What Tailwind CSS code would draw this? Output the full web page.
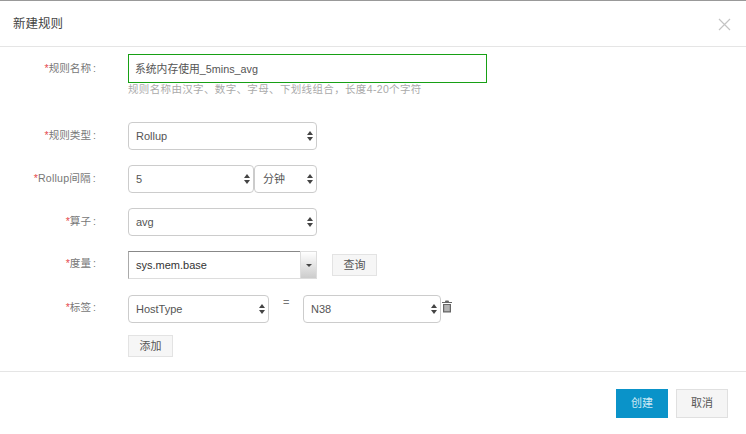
<!DOCTYPE html>
<html lang="en">
	<head>
		<meta charset="UTF-8" />
		<title>新建规则</title>
		<script src="https://cdn.jsdelivr.net/npm/@tailwindcss/browser@4"></script>
	</head>
	<body class="h-[434px] w-[746px] overflow-hidden bg-white font-['Liberation_Sans','Noto_Sans_CJK_SC',sans-serif] text-[11px] text-[#555]">
		<div class="h-px bg-[#999]"></div>
		<header class="flex h-[46px] items-center justify-between border-b border-[#e5e5e5] pl-[13px] pr-[15px] pt-px">
			<h1 class="text-[12.5px] font-normal text-[#444]">新建规则</h1>
			<svg class="size-[13px]" viewBox="0 0 13 13" fill="none" stroke="#c4c4c4" stroke-width="1.2"><path d="M1 1l11 11M12 1L1 12" /></svg>
		</header>
		<form class="h-[324px] pt-[7px]">
			<div class="flex">
				<label class="w-[96px] pt-[7px] text-right text-[10.6px] text-[#777]"><span class="text-[#e5484d]">*</span>规则名称<span class="ml-[2px]">:</span></label>
				<div class="ml-[32px]">
					<input class="block h-[29px] w-[359px] border border-[#17a015] pb-px pl-[6px] text-[10.8px] text-[#555]" value="系统内存使用_5mins_avg" />
					<p class="-mt-px mb-[2px] text-[10.5px] leading-[14px] tracking-[0.35px] text-[#aaa]">规则名称由汉字、数字、字母、下划线组合，长度4-20个字符</p>
				</div>
			</div>
			<div class="mt-[24px] flex items-center">
				<label class="w-[96px] text-right text-[10.6px] text-[#777]"><span class="text-[#e5484d]">*</span>规则类型<span class="ml-[2px]">:</span></label>
				<div class="ml-[32px] flex h-[28px] w-[189px] items-center justify-between rounded-[4px] border border-[#ccc] pl-[7px] pr-[3px]">
					<span>Rollup</span>
					<svg class="h-[10px] w-[6px]" viewBox="0 0 6 10" fill="#444"><path d="M3 0l3 4H0zM3 10L0 6h6z" /></svg>
				</div>
			</div>
			<div class="mt-[15px] flex items-center">
				<label class="w-[96px] text-right text-[10.6px] tracking-[0.2px] text-[#777]"><span class="text-[#e5484d]">*</span>Rollup间隔<span class="ml-[2px]">:</span></label>
				<div class="ml-[32px] flex h-[28px] w-[126px] items-center justify-between rounded-[4px] border border-[#ccc] pl-[7px] pr-[3px]">
					<span>5</span>
					<svg class="h-[10px] w-[6px]" viewBox="0 0 6 10" fill="#444"><path d="M3 0l3 4H0zM3 10L0 6h6z" /></svg>
				</div>
				<div class="flex h-[28px] w-[63px] items-center justify-between rounded-[4px] border border-[#ccc] pl-[8px] pr-[3px]">
					<span>分钟</span>
					<svg class="h-[10px] w-[6px]" viewBox="0 0 6 10" fill="#444"><path d="M3 0l3 4H0zM3 10L0 6h6z" /></svg>
				</div>
			</div>
			<div class="mt-[15px] flex items-center">
				<label class="w-[96px] text-right text-[10.6px] text-[#777]"><span class="text-[#e5484d]">*</span>算子<span class="ml-[2px]">:</span></label>
				<div class="ml-[32px] flex h-[28px] w-[189px] items-center justify-between rounded-[4px] border border-[#ccc] pl-[7px] pr-[3px]">
					<span>avg</span>
					<svg class="h-[10px] w-[6px]" viewBox="0 0 6 10" fill="#444"><path d="M3 0l3 4H0zM3 10L0 6h6z" /></svg>
				</div>
			</div>
			<div class="mt-[15px] flex items-center">
				<label class="w-[96px] pb-[2px] text-right text-[10.6px] text-[#777]"><span class="text-[#e5484d]">*</span>度量<span class="ml-[2px]">:</span></label>
				<div class="ml-[32px] flex h-[28px] w-[189px]">
					<div class="flex flex-1 items-center border border-b-[#ddd] border-l-[#aaa] border-r-0 border-t-[#888] pl-[7px] text-[#333]">sys.mem.base</div>
					<div class="flex w-[17px] items-center justify-center border border-[#ddd] bg-gradient-to-b from-white to-[#ccc]">
						<svg class="h-[3px] w-[6px]" viewBox="0 0 6 3" fill="#444"><path d="M0 0h6L3 3z" /></svg>
					</div>
				</div>
				<button type="button" class="ml-[15px] h-[22px] w-[45px] border border-[#e3e3e3] bg-[#f6f6f6] text-[11px] text-[#555]">查询</button>
			</div>
			<div class="mt-[16px] flex">
				<label class="w-[96px] pt-[5px] text-right text-[10.6px] text-[#777]"><span class="text-[#e5484d]">*</span>标签<span class="ml-[2px]">:</span></label>
				<div class="ml-[32px]">
					<div class="flex">
						<div class="flex h-[28px] w-[141px] items-center justify-between rounded-[4px] border border-[#ccc] pl-[7px] pr-[3px]">
							<span>HostType</span>
							<svg class="h-[10px] w-[6px]" viewBox="0 0 6 10" fill="#444"><path d="M3 0l3 4H0zM3 10L0 6h6z" /></svg>
						</div>
						<span class="ml-[14px] w-[20px] leading-[14px] text-[#777]">=</span>
						<div class="flex h-[28px] w-[138px] items-center justify-between rounded-[4px] border border-[#ccc] pl-[7px] pr-[3px]">
							<span>N38</span>
							<svg class="h-[10px] w-[6px]" viewBox="0 0 6 10" fill="#444"><path d="M3 0l3 4H0zM3 10L0 6h6z" /></svg>
						</div>
						<svg class="ml-px mt-[5px] h-[13px] w-[10px]" viewBox="0 0 10 12" fill="#666"><path d="M3.5 0h3l.6 1.4H10v1.2H0V1.4h2.9zM1 3.4h8V12H1zM2.6 4.6v6.2h.9V4.6zm1.9 0v6.2h1V4.6zm2 0v6.2h.9V4.6z" fill-rule="evenodd" /></svg>
					</div>
					<button type="button" class="mt-[12px] block h-[22px] w-[45px] border border-[#e3e3e3] bg-[#f6f6f6] text-[11px] text-[#555]">添加</button>
				</div>
			</div>
		</form>
		<footer class="flex justify-end gap-[8px] border-t border-[#e5e5e5] pr-[18px] pt-[17px]">
			<button type="button" class="h-[29px] w-[52px] bg-[#0a93c9] text-[11px] text-[#cfeaf5]">创建</button>
			<button type="button" class="h-[29px] w-[52px] border border-[#e0e0e0] bg-[#f5f5f5] text-[11px] text-[#555]">取消</button>
		</footer>
	</body>
</html>
